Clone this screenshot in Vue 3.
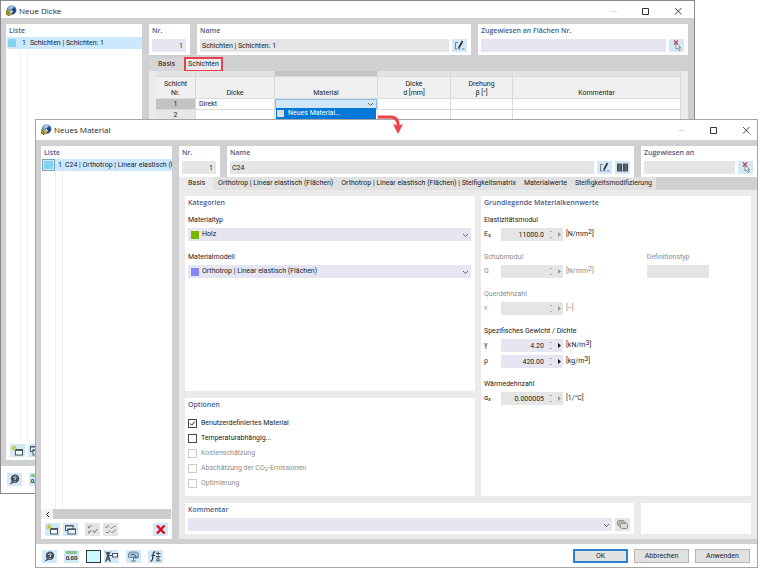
<script setup>
import { ref } from 'vue'

const tabs = [
  'Basis',
  'Orthotrop | Linear elastisch (Flächen)',
  'Orthotrop | Linear elastisch (Flächen) | Steifigkeitsmatrix',
  'Materialwerte',
  'Steifigkeitsmodifizierung'
]
const activeTab = ref('Basis')

const layerName = ref('Schichten | Schichten: 1')
const materialName = ref('C24')
const layers = ref([
  { nr: 1, dicke: 'Direkt' },
  { nr: 2, dicke: '' }
])

const groups = ref([
  { title: 'Elastizitätsmodul', rows: [{ id: 'ex', sym: 'E', sub: 'x', value: '11000.0', unit: 'N/mm', sup: '2', state: 'locked' }] },
  { title: 'Schubmodul', off: true, type: 'Definitionstyp', rows: [{ id: 'g', sym: 'G', value: '', unit: 'N/mm', sup: '2', state: 'off' }] },
  { title: 'Querdehnzahl', off: true, rows: [{ id: 'nu', sym: 'ν', value: '', unit: '--', state: 'off' }] },
  {
    title: 'Spezifisches Gewicht / Dichte',
    rows: [
      { id: 'gamma', sym: 'γ', value: '4.20', unit: 'kN/m', sup: '3', state: 'edit' },
      { id: 'rho', sym: 'ρ', value: '420.00', unit: 'kg/m', sup: '3', state: 'edit' }
    ]
  },
  { title: 'Wärmedehnzahl', rows: [{ id: 'alpha', sym: 'α', sub: 'x', value: '0.000005', unit: '1/°C', state: 'locked' }] }
])

const options = ref([
  { id: 'custom', label: 'Benutzerdefiniertes Material', checked: true },
  { id: 'temp', label: 'Temperaturabhängig...', checked: false },
  { id: 'cost', label: 'Kostenschätzung', checked: false, off: true },
  { id: 'co2', label: 'Abschätzung der CO', sub: '2', rest: '-Emissionen', checked: false, off: true },
  { id: 'opt', label: 'Optimierung', checked: false, off: true }
])
</script>

<template>
  <div class="desktop">
    <svg class="sprite" aria-hidden="true">
      <symbol id="logo" viewBox="0 0 12 12">
        <circle cx="6.6" cy="5.2" r="4.8" fill="#4b72ad" />
        <path d="M3 3Q5 0 9 1L7 4L4 5Z" fill="#a9c1df" />
        <path d="M7 4L10 3L11 6L8 9L6 7Z" fill="#23457f" />
        <path d="M1 5L4 5L7 9L5 11L1 10Z" fill="#b4a03d" />
        <path d="M2 6L4 9M1 8L4 11" stroke="#66682f" stroke-width="1" />
        <path d="M6 5L8 6L7 8L5 7Z" fill="#dce7f2" />
      </symbol>
      <symbol id="edit" viewBox="0 0 15 13">
        <path d="M6 3.500H3.500V10H5.500M7 10H8.500M10 10H12.500" fill="none" stroke="#708090" />
        <path d="M10.500 2L7 8.500" stroke="#26323d" stroke-width="1.600" />
        <path d="M6.500 8L6 10L7.800 9Z" fill="#26323d" />
      </symbol>
      <symbol id="book" viewBox="0 0 15 13">
        <path d="M2 2.500H6.500L7.500 3.500L8.500 2.500H13V10.500H8.500L7.500 11L6.500 10.500H2Z" fill="#4a535a" />
        <path d="M7.500 3V11" stroke="#d3e8f8" stroke-width="0.800" />
        <path d="M4.500 3V10M10.500 3V10" stroke="#7d8a93" stroke-width="0.600" />
      </symbol>
      <symbol id="pick" viewBox="0 0 15 13">
        <path d="M5 1.500L9 5.500M9 1.500L5 5.500" stroke="#c9404b" stroke-width="1.200" />
        <path d="M7 4.500V10L8.500 9L10 11.500L11.300 10.800L10 8.500H11.500Z" fill="#fff" stroke="#6b7378" stroke-width="0.800" />
      </symbol>
      <symbol id="new" viewBox="0 0 15 13">
        <rect x="5.500" y="5.500" width="7" height="5.500" fill="#f4f8fb" stroke="#46525e" />
        <path d="M5 6.200H13" stroke="#46525e" stroke-width="1.400" />
        <path d="M4 1V7M1 4H7M2 2L6 6M6 2L2 6" stroke="#b7c621" stroke-width="0.900" />
      </symbol>
      <symbol id="copy" viewBox="0 0 15 13">
        <rect x="2.500" y="2.500" width="7.500" height="5" fill="#e7f1f9" stroke="#4a5666" />
        <path d="M2 2.800H10.500" stroke="#4a5666" stroke-width="1.400" />
        <rect x="5" y="6" width="7.500" height="5" fill="#f4f8fb" stroke="#4a5666" />
        <path d="M4.500 6.300H13" stroke="#4a5666" stroke-width="1.400" />
      </symbol>
      <symbol id="checkall" viewBox="0 0 15 13">
        <path d="M3 3L4 5L6.500 2M3 8L4 10L6.500 7M8 7.500L9.500 9.500L12.500 6" fill="none" stroke="#848484" stroke-width="1.100" />
      </symbol>
      <symbol id="checkinv" viewBox="0 0 15 13">
        <path d="M2.500 3L3.500 5L6 2M7.500 4.500L8.500 5.500L10.500 3.500H12.500M3 9.500H5.500L7 7.500M8 8.500L9.500 10L12.500 6.500" fill="none" stroke="#848484" />
      </symbol>
      <symbol id="del" viewBox="0 0 15 13">
        <path d="M4 2.500L11.500 10.500M11.500 2.500L4 10.500" stroke="#e30613" stroke-width="2.400" />
      </symbol>
      <symbol id="help" viewBox="0 0 15 13">
        <circle cx="8" cy="5.800" r="4.200" fill="#46525e" />
        <path d="M5 8L2.500 11.500L6.500 10Z" fill="#46525e" />
        <path d="M6.500 5Q7 3.300 8.500 3.800Q10 4.800 8 6V7M8 8V9" fill="none" stroke="#dbe9f4" />
      </symbol>
      <symbol id="person" viewBox="0 0 15 13">
        <path d="M1 1.500L4 4.500L7 1.500" fill="none" stroke="#46525e" />
        <circle cx="4" cy="3.500" r="1.800" fill="#46525e" />
        <path d="M3 5H5L5.500 7.500L7 11.500H5.300L4 9L2.700 11.500H1L2.500 7.500Z" fill="#46525e" />
        <path d="M5 5.500H9" stroke="#46525e" />
        <rect x="8.500" y="3.500" width="5" height="3.500" fill="#f4f8fb" stroke="#46525e" />
      </symbol>
      <symbol id="display" viewBox="0 0 15 13">
        <path d="M2.500 7.500V4Q3 2 5 2H10.500Q12.500 2.500 12.500 4.500V7.500Z" fill="#a9c3da" stroke="#6d8aa5" />
        <path d="M5 4.500H8.500Q10 5 10 8M8 6.500L10 8.500L12 6.500" fill="none" stroke="#405b76" />
        <path d="M5 11H10M7.500 8V11" stroke="#6d7b88" />
      </symbol>
      <symbol id="formula" viewBox="0 0 15 13">
        <path d="M7.500 2Q5.500 1.500 5.200 4L4.500 9Q4 11.500 2.500 10.800M3.500 5.500H7" fill="none" stroke="#26323d" stroke-width="1.200" />
        <path d="M8 3.500H12.500M10.200 1.500V5.500M8 6.500H12.500M8.500 7L11.500 10M11.500 7L8.500 10M8 10.800H12.500" stroke="#34424f" stroke-width="0.900" />
      </symbol>
      <symbol id="notes" viewBox="0 0 15 13">
        <rect x="2.500" y="2.500" width="7" height="5" rx="1.500" fill="#ccc" stroke="#929292" />
        <rect x="4" y="4" width="7" height="5" rx="1.500" fill="#ccc" stroke="#929292" />
        <rect x="5.500" y="5.500" width="7" height="5" rx="1.500" fill="#ddd" stroke="#929292" />
      </symbol>
      <symbol id="min" viewBox="0 0 8 8"><path d="M0 4.500H7" stroke="#ddd" /></symbol>
      <symbol id="max" viewBox="0 0 8 8"><path d="M.5 1.500H6.500V7.500H.5Z" fill="none" stroke="#333" /></symbol>
      <symbol id="close" viewBox="0 0 8 8"><path d="M1 1L7.500 7.500M7.500 1L1 7.500" stroke="#333" stroke-width="0.900" /></symbol>
    </svg>

    <section class="window back">
      <header class="titlebar">
        <svg class="logo"><use href="#logo" /></svg>
        <h1>Neue Dicke</h1>
        <button v-for="b in ['min', 'max', 'close']" :key="b" class="winbtn" :aria-label="b"><svg><use :href="'#' + b" /></svg></button>
      </header>
      <div class="body">
        <aside class="list">
          <h2>Liste</h2>
          <div class="entries">
            <div class="entry"><i class="swatch"></i><span class="num">1</span><span class="entry-text">Schichten | Schichten: 1</span></div>
          </div>
          <div class="list-tools">
            <button class="icon" aria-label="Neu"><svg><use href="#new" /></svg></button>
            <button class="icon" aria-label="Kopieren"><svg><use href="#copy" /></svg></button>
          </div>
        </aside>
        <main class="content">
          <div class="head">
            <div class="panel">
              <h2><label for="d-nr">Nr.</label></h2>
              <div class="line"><input id="d-nr" class="field edit right" value="1"></div>
            </div>
            <div class="panel">
              <h2><label for="d-name">Name</label></h2>
              <div class="line">
                <input id="d-name" v-model="layerName" class="field">
                <button class="icon" aria-label="Bearbeiten"><svg><use href="#edit" /></svg></button>
              </div>
            </div>
            <div class="panel">
              <h2><label for="d-assign">Zugewiesen an Flächen Nr.</label></h2>
              <div class="line">
                <input id="d-assign" class="field edit">
                <button class="icon" aria-label="Auswählen"><svg><use href="#pick" /></svg></button>
              </div>
            </div>
          </div>
          <nav class="tabs">
            <button class="tab">Basis</button>
            <button class="tab marked">Schichten</button>
          </nav>
          <div class="sheet">
            <table>
              <colgroup>
                <col class="c-nr"><col class="c-dicke"><col class="c-mat"><col class="c-d"><col class="c-rot"><col>
              </colgroup>
              <thead>
                <tr class="strip"><td></td><td></td><td class="current"></td><td></td><td></td><td></td></tr>
                <tr>
                  <th>Schicht<br>Nr.</th>
                  <th>Dicke</th>
                  <th>Material</th>
                  <th>Dicke<br>d [mm]</th>
                  <th>Drehung<br>β [°]</th>
                  <th>Kommentar</th>
                </tr>
              </thead>
              <tbody>
                <tr v-for="l in layers" :key="l.nr">
                  <th :class="{ current: l.nr === 1 }">{{ l.nr }}</th>
                  <td>{{ l.dicke }}</td>
                  <td class="mat">
                    <div v-if="l.nr === 1" class="cell-select">
                      <select aria-label="Material"><option></option></select>
                      <svg class="chev" viewBox="0 0 7 5"><path d="M1 1L3.500 3.500L6 1" /></svg>
                      <button class="menu-item"><i></i>Neues Material...</button>
                    </div>
                  </td>
                  <td></td>
                  <td></td>
                  <td></td>
                </tr>
              </tbody>
            </table>
          </div>
        </main>
      </div>
      <footer class="footer">
        <button class="icon" aria-label="Hilfe"><svg><use href="#help" /></svg></button>
        <button class="icon units" aria-label="Einheiten"><i></i>0,00</button>
      </footer>
    </section>

    <section class="window front">
      <header class="titlebar">
        <svg class="logo"><use href="#logo" /></svg>
        <h1>Neues Material</h1>
        <button v-for="b in ['min', 'max', 'close']" :key="b" class="winbtn" :aria-label="b"><svg><use :href="'#' + b" /></svg></button>
      </header>
      <div class="body">
        <aside class="list">
          <h2>Liste</h2>
          <div class="entries">
            <div class="entry"><i class="swatch framed"></i><span class="num">1</span><span class="entry-text">C24 | Orthotrop | Linear elastisch (Flächen)</span></div>
          </div>
          <div class="scroll">
            <button aria-label="Nach links"><svg viewBox="0 0 5 7"><path d="M4 1L1.500 3.500L4 6" /></svg></button>
            <i></i>
          </div>
          <div class="list-tools">
            <button class="icon" aria-label="Neu"><svg><use href="#new" /></svg></button>
            <button class="icon" aria-label="Kopieren"><svg><use href="#copy" /></svg></button>
            <button class="icon off apart" aria-label="Alle auswählen" disabled><svg><use href="#checkall" /></svg></button>
            <button class="icon off" aria-label="Auswahl umkehren" disabled><svg><use href="#checkinv" /></svg></button>
            <button class="icon last" aria-label="Löschen"><svg><use href="#del" /></svg></button>
          </div>
        </aside>
        <main class="content">
          <div class="head">
            <div class="panel">
              <h2><label for="m-nr">Nr.</label></h2>
              <div class="line"><input id="m-nr" class="field right" value="1" readonly></div>
            </div>
            <div class="panel">
              <h2><label for="m-name">Name</label></h2>
              <div class="line">
                <input id="m-name" v-model="materialName" class="field">
                <button class="icon" aria-label="Bearbeiten"><svg><use href="#edit" /></svg></button>
                <button class="icon" aria-label="Bibliothek"><svg><use href="#book" /></svg></button>
              </div>
            </div>
            <div class="panel">
              <h2><label for="m-assign">Zugewiesen an</label></h2>
              <div class="line">
                <input id="m-assign" class="field" readonly>
                <button class="icon" aria-label="Auswählen"><svg><use href="#pick" /></svg></button>
              </div>
            </div>
          </div>
          <nav class="tabs">
            <button v-for="t in tabs" :key="t" class="tab" :class="{ active: t === activeTab }" @click="activeTab = t">{{ t }}</button>
          </nav>
          <div class="page">
            <div class="columns">
              <div class="stack">
                <div class="panel grow">
                  <h2>Kategorien</h2>
                  <div class="group">
                    <label for="typ">Materialtyp</label>
                    <div class="pick">
                      <i class="green"></i>
                      <select id="typ"><option>Holz</option></select>
                      <svg class="chev" viewBox="0 0 7 5"><path d="M1 1L3.500 3.500L6 1" /></svg>
                    </div>
                  </div>
                  <div class="group">
                    <label for="modell">Materialmodell</label>
                    <div class="pick">
                      <i class="violet"></i>
                      <select id="modell"><option>Orthotrop | Linear elastisch (Flächen)</option></select>
                      <svg class="chev" viewBox="0 0 7 5"><path d="M1 1L3.500 3.500L6 1" /></svg>
                    </div>
                  </div>
                </div>
                <div class="panel options">
                  <h2>Optionen</h2>
                  <label v-for="o in options" :key="o.id" class="option" :class="{ disabled: o.off }">
                    <input v-model="o.checked" type="checkbox" :disabled="o.off">
                    <span>{{ o.label }}<sub v-if="o.sub">{{ o.sub }}</sub>{{ o.rest }}</span>
                  </label>
                </div>
              </div>
              <div class="panel">
                <h2>Grundlegende Materialkennwerte</h2>
                <div v-for="g in groups" :key="g.title" class="values" :class="{ disabled: g.off }">
                  <div class="group">
                    <span>{{ g.title }}</span>
                    <div v-for="r in g.rows" :key="r.id" class="value" :class="r.state">
                      <label :for="r.id">{{ r.sym }}<sub v-if="r.sub">{{ r.sub }}</sub></label>
                      <div class="spin">
                        <input :id="r.id" v-model="r.value" :disabled="r.state === 'off'" :readonly="r.state === 'locked'">
                        <svg viewBox="0 0 16 13">
                          <path class="updown" d="M3 4L4 3L5 4ZM3 9L4 10L5 9Z" />
                          <path class="more" d="M11 4L14 6.500L11 9Z" />
                        </svg>
                      </div>
                      <span>[{{ r.unit }}<sup v-if="r.sup">{{ r.sup }}</sup>]</span>
                    </div>
                  </div>
                  <div v-if="g.type" class="group deftype">
                    <label for="deftyp">{{ g.type }}</label>
                    <input id="deftyp" class="field" disabled>
                  </div>
                </div>
              </div>
            </div>
            <div class="comment">
              <div class="panel">
                <h2><label for="kommentar">Kommentar</label></h2>
                <div class="line">
                  <div class="pick">
                    <select id="kommentar"><option></option></select>
                    <svg class="chev" viewBox="0 0 7 5"><path d="M1 1L3.500 3.500L6 1" /></svg>
                  </div>
                  <button class="icon off" aria-label="Kommentare" disabled><svg><use href="#notes" /></svg></button>
                </div>
              </div>
              <div class="panel"></div>
            </div>
          </div>
        </main>
      </div>
      <footer class="footer">
        <button class="icon" aria-label="Hilfe"><svg><use href="#help" /></svg></button>
        <button class="icon units" aria-label="Einheiten"><i></i>0,00</button>
        <button class="icon color" aria-label="Farbe"></button>
        <button class="icon near" aria-label="Zuordnung"><svg><use href="#person" /></svg></button>
        <button class="icon" aria-label="Anzeige"><svg><use href="#display" /></svg></button>
        <button class="icon" aria-label="Formel"><svg><use href="#formula" /></svg></button>
        <div class="actions">
          <button class="btn primary">OK</button>
          <button class="btn">Abbrechen</button>
          <button class="btn">Anwenden</button>
        </div>
      </footer>
    </section>

    <svg class="arrow" viewBox="0 0 28 20">
      <path d="M0 3.500H13Q20 3.500 21 10V12" fill="none" stroke="#a8a8a8" stroke-width="3" opacity="0.400" />
      <path d="M0 2H12Q20 2 20 9V11" fill="none" stroke="#ee4248" stroke-width="3" />
      <path d="M15 9L20 11L25 9L20 19Z" fill="#ee4248" />
    </svg>
  </div>
</template>

<style>
body {
  margin: 0;
  background: white;
}
</style>

<style scoped>
.desktop {
  position: relative;
  min-height: 100vh;
  overflow: hidden;
  font-family: Roboto, "Noto Sans", sans-serif;
  font-size: 7px;
  line-height: 9px;
  color: #1c1c1c;
}

.desktop * {
  box-sizing: border-box;
}

.sprite {
  position: absolute;
  width: 0;
  height: 0;
}

button, input, select {
  margin: 0;
  padding: 0;
  border: none;
  border-radius: 0;
  background: none;
  font: inherit;
  color: inherit;
}

h1, h2 {
  margin: 0;
  font-family: "Open Sans", "Noto Sans", sans-serif;
}

svg {
  display: block;
}

.window {
  position: absolute;
  display: flex;
  flex-direction: column;
  background: white;
  border: 1px solid #a5a5a8;
}

.back {
  inset: 0 65px 76px 0;
  border-color: #8a8a8d;
}

.front {
  inset: 119px 2px 2px 35px;
}

.titlebar {
  display: flex;
  align-items: center;
  height: 20px;
  padding: 0 3px 0 4px;
}

.back .titlebar {
  height: 17px;
  padding: 2px 8px 0 4px;
}

.logo {
  width: 12px;
  height: 12px;
}

.titlebar h1 {
  flex: 1;
  padding-left: 2px;
  font-size: 8px;
  line-height: 12px;
  font-weight: normal;
}

.winbtn {
  display: flex;
  align-items: center;
  justify-content: center;
  width: 32px;
  height: 14px;
}

.winbtn:last-child {
  width: 16px;
  margin-left: 8px;
}

.winbtn svg {
  width: 8px;
  height: 8px;
}

.body {
  flex: 1;
  display: flex;
  gap: 7px;
  padding: 6px 0 5px 5px;
  background: #d0d0d3;
}

.back .body {
  padding: 6px 6px 6px 5px;
}

.list {
  display: flex;
  flex-direction: column;
  width: 131px;
  background: white;
}

.back .list {
  width: 136px;
}

h2 {
  font-size: 7px;
  line-height: 9px;
  font-weight: 600;
  color: #4c5a88;
}

.list h2 {
  padding: 2px 3px;
}

.entries {
  flex: 1;
  background: linear-gradient(to right, transparent 14px, #f0f0f0 14px 15px, transparent 15px 21px, #f0f0f0 21px 22px, transparent 22px);
}

.entry {
  display: flex;
  align-items: center;
  height: 12px;
  margin-left: 1px;
  overflow: hidden;
  white-space: nowrap;
  background: #cce8ff;
}

.swatch {
  flex: none;
  width: 8px;
  height: 8px;
  margin-left: 1px;
  background: #84d3f3;
}

.swatch.framed {
  width: 13px;
  height: 12px;
  margin: 0;
  border: 2px solid #cce8ff;
  outline: 1px solid #7ea3bd;
  outline-offset: -1px;
}

.num {
  padding: 0 3px;
}

.back .num {
  padding: 0 4px 0 6px;
}

.scroll {
  display: flex;
  height: 10px;
  margin-bottom: 1px;
  background: #f2f2f2;
}

.scroll button {
  width: 12px;
}

.scroll svg {
  width: 5px;
  height: 7px;
  margin: 0 auto;
  fill: none;
  stroke: #333;
}

.scroll i {
  flex: 1;
  margin-right: 1px;
  background: #cdcdcd;
}

.list-tools {
  display: flex;
  gap: 3px;
  padding: 3px 4px;
}

.icon {
  flex: none;
  width: 15px;
  height: 13px;
  background: #d3e8f8;
}

.icon svg {
  width: 15px;
  height: 13px;
}

.icon.off {
  background: #e4e4e4;
}

.icon.apart {
  margin-left: 4px;
}

.icon.last {
  margin-left: auto;
}

.icon.units {
  display: flex;
  flex-direction: column;
  align-items: center;
  font-size: 6px;
  line-height: 8px;
  font-weight: 600;
}

.units i {
  width: 11px;
  height: 3px;
  margin-top: 1px;
  background: #8cc48a;
}

.content {
  flex: 1;
  min-width: 0;
  display: flex;
  flex-direction: column;
}

.head {
  display: grid;
  grid-template-columns: 41px 1fr 116px;
  gap: 7px;
}

.back .head {
  grid-template-columns: 41px 1fr 210px;
}

.panel {
  padding: 2px 4px 3px 3px;
  background: white;
}

.line {
  display: flex;
  gap: 3px;
  margin-top: 4px;
}

.field {
  flex: 1;
  min-width: 0;
  height: 13px;
  padding: 0 2px;
  background: #e5e5e5;
}

.field.edit {
  background: #e6e6f2;
}

.field.right {
  padding-right: 3px;
  text-align: right;
}

.tabs {
  display: flex;
  height: 13px;
}

.back .tabs {
  margin-top: 3px;
}

.tab {
  padding: 0 4px;
  background: #e1e1e2;
  white-space: nowrap;
}

.tab:first-child {
  padding: 0 9px;
}

.tab.active {
  background: #ebebeb;
}

.back .tab {
  background: #d6d6d8;
}

.back .tab.marked {
  padding: 0 3px;
  margin-left: 1px;
  background: #ebebeb;
  outline: 2px solid #e9414b;
  outline-offset: -1px;
}

.sheet {
  flex: 1;
  padding: 0 7px;
  background: #ebebeb;
}

table {
  width: 100%;
  table-layout: fixed;
  border-collapse: separate;
  border-spacing: 0;
}

.c-nr { width: 40px; }
.c-dicke { width: 79px; }
.c-mat { width: 103px; }
.c-d { width: 73px; }
.c-rot { width: 62px; }

.strip td {
  height: 6px;
  background: #e3e3e3;
}

.strip td.current {
  background: #c3c3c3;
}

th, td {
  padding: 0;
  border-right: 1px solid #dadada;
  border-bottom: 1px solid #dadada;
  font-weight: normal;
}

thead th {
  height: 22px;
  vertical-align: bottom;
  background: #f0f0f0;
}

tbody td {
  height: 11px;
  padding-left: 3px;
  background: white;
}

tbody th {
  background: #e6e6e6;
}

tbody th.current {
  background: #c3c3c3;
}

tbody .mat {
  padding: 0;
}

.cell-select {
  position: relative;
  display: flex;
  background: #cfe6f8;
  border: 1px solid #8dbde3;
}

.cell-select select {
  width: 100%;
  height: 8px;
  appearance: none;
}

.chev {
  position: absolute;
  right: 2px;
  top: 50%;
  width: 7px;
  height: 5px;
  margin-top: -2px;
  fill: none;
  stroke: #666;
  pointer-events: none;
}

.menu-item {
  position: absolute;
  top: 100%;
  left: 0;
  right: 0;
  display: flex;
  align-items: center;
  gap: 4px;
  height: 11px;
  padding-left: 1px;
  background: #0078d7;
  color: white;
}

.menu-item i {
  width: 7px;
  height: 7px;
  background: #dcdcdc;
}

.page {
  flex: 1;
  display: flex;
  flex-direction: column;
  gap: 7px;
  padding: 6px 6px 5px;
  background: #ebebeb;
}

.columns {
  flex: 1;
  display: grid;
  grid-template-columns: 29fr 27fr;
  gap: 6px;
}

.stack {
  display: flex;
  flex-direction: column;
  gap: 7px;
}

.grow {
  flex: 1;
}

.group {
  display: flex;
  flex-direction: column;
  gap: 3px;
}

.columns h2 {
  margin-bottom: 9px;
}

.columns .group {
  margin-bottom: 12px;
}

.pick {
  flex: 1;
  position: relative;
  display: flex;
  align-items: center;
  height: 13px;
  padding-left: 3px;
  background: #e6e6f2;
}

.pick i {
  width: 8px;
  height: 8px;
  margin-right: 3px;
}

.group .pick {
  flex: none;
}

.green { background: #76b900; }
.violet { background: #8585f5; }

.pick select {
  flex: 1;
  height: 13px;
  appearance: none;
}

.options {
  padding-bottom: 5px;
}

.options h2 {
  margin-bottom: 7px;
}

.option {
  display: flex;
  align-items: center;
  gap: 4px;
  height: 15px;
}

.option input {
  width: 9px;
  height: 9px;
  border: 1px solid #444;
  appearance: none;
}

.option input:checked {
  background: no-repeat center / 7px 7px url("data:image/svg+xml,%3Csvg xmlns='http://www.w3.org/2000/svg' viewBox='0 0 7 7'%3E%3Cpath d='M1 3.500L2.700 5.200L6 1.500' fill='none' stroke='%23222'/%3E%3C/svg%3E");
}

.option input:disabled {
  border-color: #ccc;
}

.disabled {
  color: #8b8b8b;
}

sub, sup {
  font-size: 7px;
  line-height: 0;
}

sub {
  font-size: 6px;
  vertical-align: -1px;
}

sup {
  vertical-align: 2px;
}

.values {
  display: grid;
  grid-template-columns: 13fr 8fr;
}

.deftype .field {
  flex: none;
  width: 62px;
}

.value {
  display: flex;
  align-items: center;
  height: 13px;
}

.value label {
  width: 17px;
}

.spin {
  display: flex;
  width: 62px;
  margin-right: 3px;
  background: #e5e5e5;
}

.edit .spin {
  background: #e6e6f2;
}

.spin input {
  flex: 1;
  min-width: 0;
  height: 13px;
  text-align: right;
}

.spin svg {
  width: 16px;
  height: 13px;
  margin-left: 3px;
}

.updown {
  fill: #777;
}

.more {
  fill: #999;
}

.edit .more {
  fill: #111;
}

.comment {
  display: grid;
  grid-template-columns: 1fr 110px;
  gap: 7px;
}

.footer {
  display: flex;
  align-items: center;
  gap: 7px;
  padding: 5px 7px 4px 6px;
}

.back .footer {
  height: 27px;
  padding: 0 6px;
}

.icon.color {
  background: #c8fbff;
  border: 1px solid #333;
}

.icon.near {
  margin-left: -4px;
}

.actions {
  display: flex;
  gap: 6px;
  margin-left: auto;
}

.btn {
  width: 55px;
  height: 14px;
  background: #e1e1e1;
  border: 1px solid #b5b5b5;
}

.btn.primary {
  border: 2px solid #2c80d0;
}

.arrow {
  position: absolute;
  top: 115px;
  left: 378px;
  width: 28px;
  height: 20px;
}
</style>
